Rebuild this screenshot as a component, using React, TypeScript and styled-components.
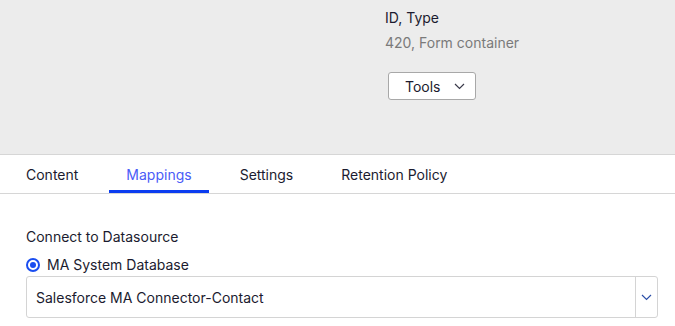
import styled, { createGlobalStyle } from "styled-components";

const GlobalStyle = createGlobalStyle`
  html, body {
    margin: 0;
    padding: 0;
    background: #ffffff;
  }
  body {
    font-family: Inter, "Noto Sans", sans-serif;
    font-size: 14px;
    color: #1f1f2e;
  }
`;

const Page = styled.div`
  width: 675px;
  height: 326px;
  overflow: hidden;
`;

const Header = styled.header`
  background: #ececec;
  height: 155px;
  border-bottom: 1px solid #d6d6d6;
  box-sizing: border-box;
  padding: 9px 0 0 385px;
`;

const InfoLabel = styled.div`
  font-size: 14px;
  line-height: 17px;
  color: #1b1b2f;
`;

const InfoValue = styled.div`
  margin-top: 8px;
  font-size: 14px;
  line-height: 17px;
  color: #7a7a7a;
`;

const ToolsButton = styled.button`
  margin: 21px 0 0 3px;
  width: 88px;
  height: 28px;
  box-sizing: border-box;
  background: #ffffff;
  border: 1px solid #a8a8a8;
  border-radius: 3px;
  display: flex;
  align-items: center;
  padding: 0 10px 0 16px;
  font-family: Inter, sans-serif;
  font-size: 14px;
  color: #1b1b2f;
  justify-content: space-between;
`;

const Tabs = styled.nav`
  display: flex;
  gap: 14px;
  padding-left: 9px;
  height: 38px;
  border-bottom: 1px solid #d6d6d6;
`;

const Tab = styled.div<{ $active?: boolean }>`
  padding: 3px 17px 0;
  display: flex;
  align-items: center;
  font-size: 14px;
  color: ${(p) => (p.$active ? "#4a5cf7" : "#1b1b2f")};
  border-bottom: 3px solid ${(p) => (p.$active ? "#0b3cf0" : "transparent")};
`;

const Body = styled.section`
  padding: 34px 17px 0 26px;
`;

const FieldLabel = styled.div`
  font-size: 14px;
  line-height: 17px;
  color: #1b1b2f;
`;

const RadioRow = styled.label`
  margin-top: 11px;
  display: flex;
  align-items: center;
  gap: 7px;
  font-size: 14px;
  line-height: 17px;
  color: #1b1b2f;
`;

const RadioDot = styled.span`
  width: 14px;
  height: 14px;
  box-sizing: border-box;
  border: 2px solid #1a4df0;
  border-radius: 50%;
  display: flex;
  align-items: center;
  justify-content: center;
  &::after {
    content: "";
    width: 6px;
    height: 6px;
    border-radius: 50%;
    background: #1a4df0;
  }
`;

const Select = styled.div`
  margin-top: 3px;
  height: 42px;
  box-sizing: border-box;
  border: 1px solid #d4d4d4;
  border-radius: 3px;
  display: flex;
  align-items: stretch;
`;

const SelectValue = styled.div`
  flex: 1;
  display: flex;
  align-items: center;
  padding-left: 9px;
  font-size: 14px;
  color: #1b1b2f;
`;

const SelectArrow = styled.div`
  width: 21px;
  border-left: 1px solid #d4d4d4;
  display: flex;
  align-items: center;
  justify-content: center;
`;

function Chevron({ color }: { color: string }) {
  return (
    <svg width="11" height="7" viewBox="0 0 11 7" fill="none">
      <path d="M1 1l4.5 4.5L10 1" stroke={color} strokeWidth="1.2" />
    </svg>
  );
}

export default function App() {
  return (
    <Page>
      <GlobalStyle />
      <Header>
        <InfoLabel>ID, Type</InfoLabel>
        <InfoValue>420, Form container</InfoValue>
        <ToolsButton>
          Tools
          <Chevron color="#3a3a4a" />
        </ToolsButton>
      </Header>
      <Tabs>
        <Tab>Content</Tab>
        <Tab $active>Mappings</Tab>
        <Tab>Settings</Tab>
        <Tab>Retention Policy</Tab>
      </Tabs>
      <Body>
        <FieldLabel>Connect to Datasource</FieldLabel>
        <RadioRow>
          <RadioDot />
          MA System Database
        </RadioRow>
        <Select>
          <SelectValue>Salesforce MA Connector-Contact</SelectValue>
          <SelectArrow>
            <Chevron color="#2c4fa8" />
          </SelectArrow>
        </Select>
      </Body>
    </Page>
  );
}
